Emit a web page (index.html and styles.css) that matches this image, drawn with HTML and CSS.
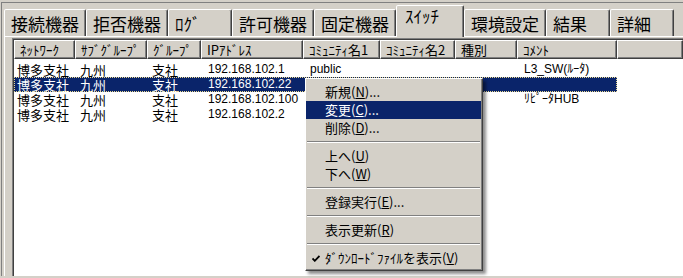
FILE: index.html
```html
<!DOCTYPE html>
<html lang="ja">
<head>
    <meta charset="UTF-8">
    <meta name="viewport" content="width=device-width, initial-scale=1.0">
    <title>スイッチ</title>
    <link rel="stylesheet" href="styles.css">
</head>
<body>
    <div class="window">
        <div class="tabs">
            <div class="tab">接続機器</div>
            <div class="tab">拒否機器</div>
            <div class="tab">ﾛｸﾞ</div>
            <div class="tab">許可機器</div>
            <div class="tab">固定機器</div>
            <div class="tab active">ｽｲｯﾁ</div>
            <div class="tab">環境設定</div>
            <div class="tab">結果</div>
            <div class="tab">詳細</div>
        </div>

        <div class="panel">
            <div class="list">
                <div class="list-header">
                    <div class="col first">ﾈｯﾄﾜｰｸ</div>
                    <div class="col">ｻﾌﾞｸﾞﾙｰﾌﾟ</div>
                    <div class="col">ｸﾞﾙｰﾌﾟ</div>
                    <div class="col">IPｱﾄﾞﾚｽ</div>
                    <div class="col">ｺﾐｭﾆﾃｨ名1</div>
                    <div class="col">ｺﾐｭﾆﾃｨ名2</div>
                    <div class="col">種別</div>
                    <div class="col">ｺﾒﾝﾄ</div>
                    <div class="col"></div>
                </div>
                <div class="list-body">
                    <div class="row">
                        <div class="cell first">博多支社</div>
                        <div class="cell">九州</div>
                        <div class="cell">支社</div>
                        <div class="cell lat">192.168.102.1</div>
                        <div class="cell lat">public</div>
                        <div class="cell"></div>
                        <div class="cell"></div>
                        <div class="cell lat">L3_SW(ﾙｰﾀ)</div>
                    </div>
                    <div class="row selected">
                        <div class="cell first">博多支社</div>
                        <div class="cell">九州</div>
                        <div class="cell">支社</div>
                        <div class="cell lat">192.168.102.22</div>
                        <div class="cell"></div>
                        <div class="cell"></div>
                        <div class="cell"></div>
                        <div class="cell"></div>
                    </div>
                    <div class="row">
                        <div class="cell first">博多支社</div>
                        <div class="cell">九州</div>
                        <div class="cell">支社</div>
                        <div class="cell lat">192.168.102.100</div>
                        <div class="cell"></div>
                        <div class="cell"></div>
                        <div class="cell"></div>
                        <div class="cell lat">ﾘﾋﾟｰﾀHUB</div>
                    </div>
                    <div class="row">
                        <div class="cell first">博多支社</div>
                        <div class="cell">九州</div>
                        <div class="cell">支社</div>
                        <div class="cell lat">192.168.102.2</div>
                        <div class="cell"></div>
                        <div class="cell"></div>
                        <div class="cell"></div>
                        <div class="cell"></div>
                    </div>
                </div>
            </div>
        </div>
    </div>

    <!-- context menu over the list -->
    <div class="menu">
        <div class="item">新規(<u>N</u>)...</div>
        <div class="item hot">変更(<u>C</u>)...</div>
        <div class="item">削除(<u>D</u>)...</div>
        <div class="sep"></div>
        <div class="item">上へ(<u>U</u>)</div>
        <div class="item">下へ(<u>W</u>)</div>
        <div class="sep"></div>
        <div class="item">登録実行(<u>E</u>)...</div>
        <div class="sep"></div>
        <div class="item">表示更新(<u>R</u>)</div>
        <div class="sep"></div>
        <div class="item checked">
            <svg class="check" width="8" height="7" viewBox="0 0 8 7"><path d="M0.5 3.5 L2.8 5.8 L7.5 1" fill="none" stroke="#000" stroke-width="1.8"/></svg>
            ﾀﾞｳﾝﾛｰﾄﾞﾌｧｲﾙを表示(<u>V</u>)
        </div>
    </div>
</body>
</html>
```

FILE: styles.css
```css
body {
    margin: 0;
    width: 683px;
    height: 278px;
    overflow: hidden;
    position: relative;
    background-color: #d4d0c8;
    font-family: "Noto Sans CJK JP", sans-serif;
    color: #000;
}
.window {
    margin: 2px 0 0 1px;
    border-top: 1px solid #808080;
    border-left: 1px solid #808080;
    padding-left: 2px;
}
.tabs {
    display: flex;
    align-items: flex-end;
    height: 33px;
}
.tab {
    position: relative;
    box-sizing: border-box;
    height: 27px;
    min-width: 64px;
    padding: 0 6px;
    display: flex;
    align-items: center;
    font-size: 17px;
    line-height: 17px;
    background-color: #d4d0c8;
    border: 1px solid;
    border-bottom: none;
    border-color: #fff #404040 transparent #fff;
    border-radius: 2px 2px 0 0;
    box-shadow: inset -1px 0 #808080;
}
.tab.active {
    height: 32px;
    min-width: 68px;
    padding: 0 8px 12px;
    margin-bottom: -1px;
    z-index: 1;
}
.panel {
    border-top: 1px solid #fff;
    border-left: 1px solid #fff;
    padding: 1px 0 0 7px;
}
.list {
    height: 236px;
    overflow: hidden;
    background-color: #fff;
    border-top: 1px solid #808080;
    border-left: 1px solid #808080;
    box-shadow: inset 1px 1px #404040;
    padding: 1px 0 0 1px;
}
.list-header {
    display: grid;
    grid-template-columns: 61px 72px 54px 102px 77px 75px 62px 100px 1fr;
    height: 19px;
}
.list-header .col {
    box-sizing: border-box;
    padding-left: 5px;
    font-size: 13px;
    line-height: 17px;
    white-space: nowrap;
    background-color: #d4d0c8;
    border: 1px solid;
    border-color: #fff #404040 #404040 #fff;
    box-shadow: inset -1px -1px #808080;
}
.list-body {
    padding-top: 3px;
}
.row {
    display: grid;
    grid-template-columns: 61px 72px 54px 102px 77px 75px 62px 100px;
    width: 603px;
    height: 15px;
}
.row .cell {
    padding-left: 5px;
    font-size: 13px;
    line-height: 15px;
    white-space: nowrap;
}
.row .cell.first {
    padding-left: 3px;
}
.row .cell.lat {
    font-family: "Liberation Sans", "Noto Sans CJK JP", sans-serif;
    font-size: 12px;
    padding-left: 7px;
}
.row.selected {
    background-color: #0a246a;
    color: #fff;
    outline: 1px dotted #e8d890;
    outline-offset: -1px;
}
.menu {
    position: absolute;
    left: 305px;
    top: 78px;
    width: 178px;
    box-sizing: border-box;
    padding: 4px 1px 3px 0;
    background-color: #d4d0c8;
    border: 1px solid;
    border-color: #fff #404040 #404040 #fff;
    box-shadow: inset -1px -1px #808080, 3px 3px 3px rgba(0, 0, 0, 0.45);
    font-size: 13px;
}
.menu .item {
    position: relative;
    height: 18px;
    line-height: 18px;
    padding-left: 19px;
    white-space: nowrap;
}
.menu .item.hot {
    background-color: #0a246a;
    color: #fff;
}
.menu .check {
    position: absolute;
    left: 6px;
    top: 6px;
}
.menu .sep {
    margin: 4px 1px;
    border-top: 1px solid #808080;
    border-bottom: 1px solid #fff;
}
```
